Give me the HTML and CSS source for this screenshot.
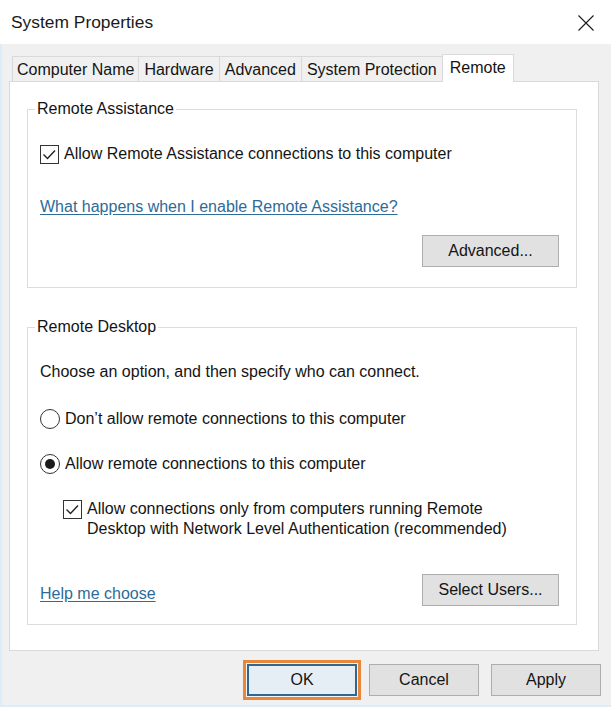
FILE: index.html
```html
<!DOCTYPE html>
<html>
<head>
<meta charset="utf-8">
<title>System Properties</title>
<link rel="stylesheet" href="styles.css">
</head>
<body>
<div class="window">
  <div class="titlebar">
    <span class="title">System Properties</span>
    <svg class="close" width="16" height="16" viewBox="0 0 16 16"><path d="M0.5 0.5 L15.5 15.5 M15.5 0.5 L0.5 15.5" stroke="#1a1a1a" stroke-width="1.1" fill="none"/></svg>
  </div>
  <div class="body">
    <div class="tabs">
      <div class="tab first">Computer Name</div>
      <div class="tab">Hardware</div>
      <div class="tab">Advanced</div>
      <div class="tab">System Protection</div>
      <div class="tab active">Remote</div>
    </div>
    <div class="panel">
      <fieldset class="group g1">
        <legend>Remote Assistance</legend>
        <div class="opt ra-check">
          <span class="checkbox"><svg width="19" height="19" viewBox="0 0 19 19"><path d="M3.5 9.5 L7.5 13.5 L15 5.5" stroke="#222" stroke-width="1.4" fill="none"/></svg></span>
          <span>Allow Remote Assistance connections to this computer</span>
        </div>
        <a class="link ra-link" href="#">What happens when I enable Remote Assistance?</a>
        <div class="btn-row ra-btns"><button class="btn wide">Advanced...</button></div>
      </fieldset>
      <fieldset class="group g2">
        <legend>Remote Desktop</legend>
        <p class="intro">Choose an option, and then specify who can connect.</p>
        <div class="opt rd-r1"><span class="radio"></span><span>Don’t allow remote connections to this computer</span></div>
        <div class="opt rd-r2"><span class="radio on"></span><span>Allow remote connections to this computer</span></div>
        <div class="opt nested">
          <span class="checkbox"><svg width="19" height="19" viewBox="0 0 19 19"><path d="M3.5 9.5 L7.5 13.5 L15 5.5" stroke="#222" stroke-width="1.4" fill="none"/></svg></span>
          <span class="two-line">Allow connections only from computers running Remote<br>Desktop with Network Level Authentication (recommended)</span>
        </div>
        <div class="btn-row rd-btns">
          <a class="link help" href="#">Help me choose</a>
          <button class="btn wide">Select Users...</button>
        </div>
      </fieldset>
    </div>
    <div class="footer">
      <button class="btn ok">OK</button>
      <button class="btn">Cancel</button>
      <button class="btn">Apply</button>
    </div>
  </div>
</div>
</body>
</html>
```
FILE: styles.css
```css
* { box-sizing: border-box; }
html, body { margin: 0; padding: 0; }
body {
  width: 611px;
  height: 707px;
  background: #f0f0f0;
  font-family: "Liberation Sans", Arial, sans-serif;
  font-size: 16px;
  color: #141414;
  overflow: hidden;
}
.window { width: 611px; height: 707px; display: flex; flex-direction: column; }
.titlebar {
  flex: none;
  height: 44px;
  background: #ffffff;
  display: flex;
  align-items: center;
  justify-content: space-between;
  padding: 0 17px 0 11px;
}
.title { font-size: 17.4px; color: #1a1a1a; }
.close { display: block; margin-top: 1px; }
.body {
  flex: 1;
  display: flex;
  flex-direction: column;
  background: #f0f0f0;
  border-left: 2px solid #dcecf8;
  border-bottom: 2px solid #dcecf8;
}
.tabs {
  flex: none;
  display: flex;
  align-items: flex-end;
  margin: 10px 0 -1px 10px;
  height: 28px;
}
.tab {
  height: 26px;
  line-height: 25px;
  padding: 0 5px;
  border: 1px solid #d9d9d9;
  margin-right: -1px;
  background: #f0f0f0;
  white-space: nowrap;
}
.tab.first { padding: 0 4px; }
.tab.active {
  height: 28px;
  line-height: 25px;
  padding: 0 7px;
  background: #ffffff;
  border-bottom: none;
  position: relative;
  z-index: 1;
}
.panel {
  flex: none;
  margin: 0 12px 0 7px;
  background: #ffffff;
  border: 1px solid #d9d9d9;
  padding: 18px 21px 25px 17px;
}
.group {
  margin: 0;
  padding: 0 17px 20px 12px;
  border: 1px solid #dcdcdc;
  min-width: 0;
}
.group legend {
  padding: 0 2px;
  margin-left: -5px;
  line-height: 18px;
}
.g2 { margin-top: 30px; padding-bottom: 18px; }
.opt { display: flex; align-items: center; gap: 5px; line-height: 20px; }
.checkbox {
  width: 19px; height: 19px;
  border: 1px solid #333;
  background: #fff;
  flex: none;
  display: flex;
}
.checkbox svg { margin: -1px; }
.radio {
  width: 20px; height: 20px;
  border: 1px solid #333;
  border-radius: 50%;
  background: #fff;
  flex: none;
  display: flex;
  align-items: center;
  justify-content: center;
}
.radio.on::after {
  content: "";
  width: 10px; height: 10px;
  border-radius: 50%;
  background: #1a1a1a;
}
.ra-check { margin-top: 26px; }
.link { color: #2d6b98; text-decoration: underline; text-underline-offset: 2px; line-height: 18px; }
.ra-link { display: block; margin-top: 34px; width: max-content; }
.btn-row { display: flex; justify-content: flex-end; }
.ra-btns { margin-top: 19px; }
.btn {
  font-family: inherit;
  font-size: 16px;
  color: #141414;
  width: 110px;
  height: 32px;
  background: #e1e1e1;
  border: 1px solid #adadad;
  padding: 0;
  margin: 0;
}
.btn.wide { width: 137px; }
.intro { margin: 27px 0 0; line-height: 18px; }
.rd-r1 { margin-top: 28px; }
.rd-r2 { margin-top: 25px; }
.nested { margin-top: 25px; margin-left: 23px; align-items: flex-start; }
.nested .checkbox { margin-top: 1px; }
.rd-btns { margin-top: 35px; justify-content: space-between; align-items: flex-end; }
.help { margin-bottom: 3px; }
.footer {
  display: flex;
  justify-content: flex-end;
  gap: 12px;
  padding: 13px 10px 0 0;
}
.btn.ok {
  background: #e5eef5;
  border: 2px solid #2f6790;
  box-shadow: 0 0 0 1px #f4f4f4, 0 0 0 4px #e8863a;
}
```
